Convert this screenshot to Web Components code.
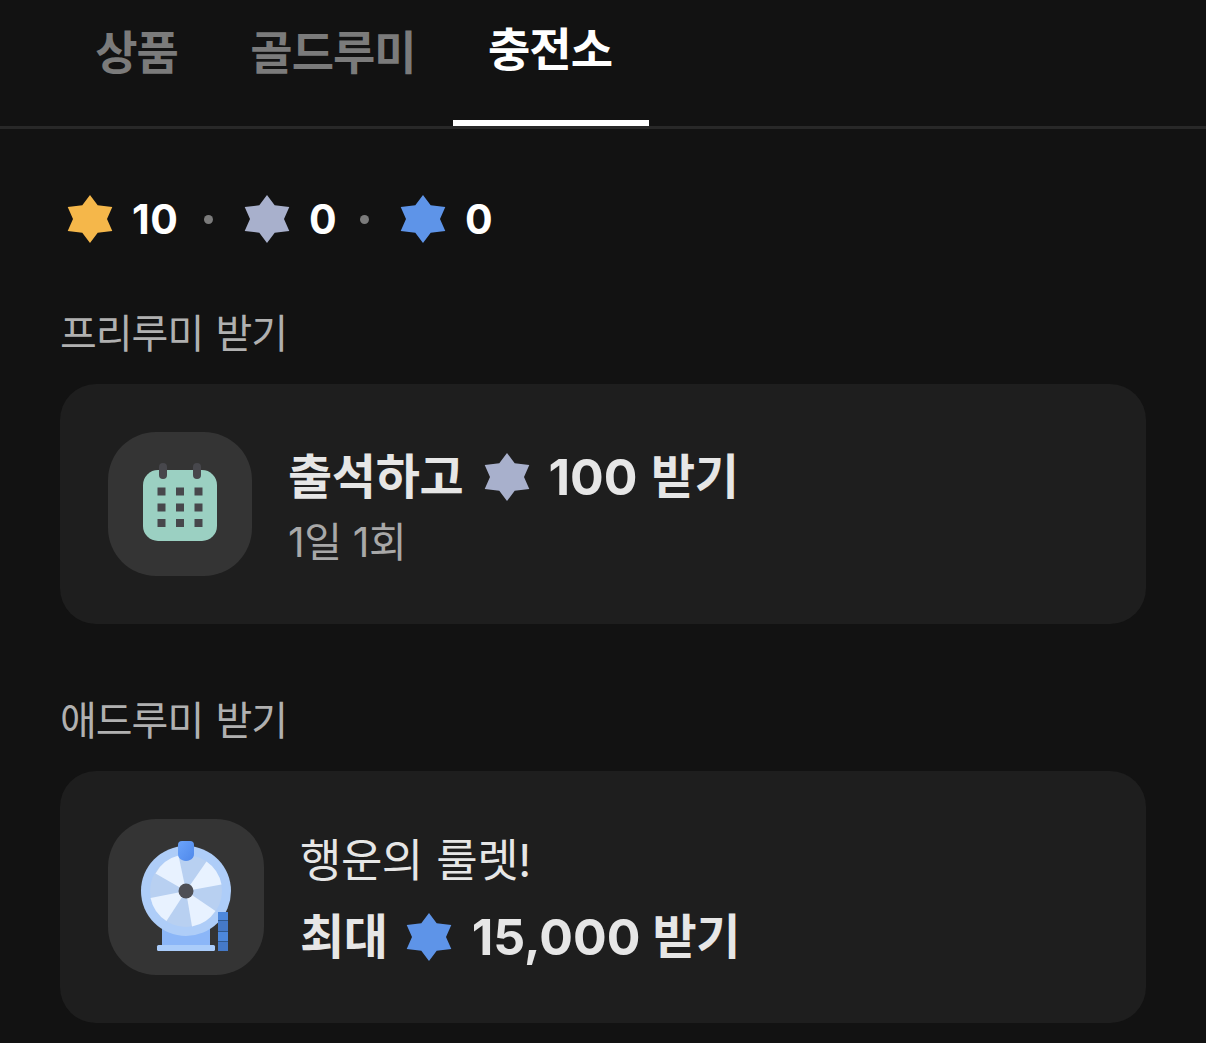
<!DOCTYPE html>
<html lang="ko">
<head>
<meta charset="UTF-8">
<meta name="viewport" content="width=device-width, initial-scale=1">
<title>충전소</title>
<style>
  :root {
    --bg: #121212;
    --card: #1e1e1e;
    --tile: #343434;
    --text: #e6e6e6;
    --muted: #b0b0b0;
    --gold: #f5b74a;
    --silver: #a8b0cc;
    --blue: #5e94e8;
  }
  html, body {
    margin: 0;
    height: 100%;
    background: var(--bg);
    overflow: hidden;
  }
  body {
    font-family: Inter, "Noto Sans CJK KR", sans-serif;
    color: var(--text);
  }
</style>
</head>
<body>
<charge-page>
  <tab-bar slot="tabs">
    <tab-item style="width:155px">상품</tab-item>
    <tab-item style="width:238px">골드루미</tab-item>
    <tab-item style="width:196px" active>충전소</tab-item>
  </tab-bar>

  <balance-list>
    <balance-item color="gold" width="46">10</balance-item>
    <balance-item color="silver" width="25">0</balance-item>
    <balance-item color="blue" width="25">0</balance-item>
  </balance-list>

  <reward-section label="프리루미 받기">
    <reward-card tile="144" offset="3">
      <calendar-icon slot="icon"></calendar-icon>
      <reward-title color="silver" amount="100" action="받기"
        style="--star-margin: 0 17.5px 0 19.5px; --amount-gap: 13.5px">출석하고</reward-title>
      <reward-note>1일 1회</reward-note>
    </reward-card>
  </reward-section>

  <reward-section label="애드루미 받기">
    <reward-card tile="156" offset="1">
      <roulette-icon slot="icon"></roulette-icon>
      <reward-note large>행운의 룰렛!</reward-note>
      <reward-title color="blue" amount="15,000" action="받기"
        style="--star-margin: 0 19px 0 17px; --amount-gap: 12px">최대</reward-title>
    </reward-card>
  </reward-section>
</charge-page>

<script>
  // Base: monta la plantilla en un shadow root abierto
  class BaseElement extends HTMLElement {
    constructor() {
      super();
      this.attachShadow({ mode: "open" });
    }

    connectedCallback() {
      this.shadowRoot.innerHTML = this.render();
    }
  }

  class ChargePage extends BaseElement {
    render() {
      return `
        <style>
          :host { display: block; }
          main { padding: 60px 60px 0; }
        </style>
        <slot name="tabs"></slot>
        <main><slot></slot></main>
      `;
    }
  }

  class TabBar extends BaseElement {
    render() {
      return `
        <style>
          :host {
            display: flex;
            height: 126px;
            padding-left: 60px;
            border-bottom: 3px solid #282828;
          }
        </style>
        <slot></slot>
      `;
    }
  }

  class TabItem extends BaseElement {
    render() {
      return `
        <style>
          :host {
            display: flex;
            justify-content: center;
            box-sizing: border-box;
            height: 126px;
            padding-top: 22px;
            padding-right: 2px;
            font-size: 46px;
            font-weight: 700;
            line-height: 60px;
            letter-spacing: -1px;
            white-space: nowrap;
            color: #7b7b7b;
          }
          :host([active]) {
            padding-top: 19px;
            border-bottom: 6px solid #fff;
            color: #fff;
          }
        </style>
        <slot></slot>
      `;
    }
  }

  // Estrella de seis puntas, la moneda de la tienda
  class RumiStar extends BaseElement {
    render() {
      return `
        <style>
          :host { display: block; flex: none; width: 48px; height: 48px; }
          svg { display: block; overflow: visible; }
        </style>
        <svg width="48" height="48" viewBox="0 0 48 48">
          <path fill="var(--${this.getAttribute("color")})"
            d="M24 0L31.7 10.3L46.3 12L41 24L46.3 36L31.7 37.7L24 48L16.3 37.7L1.7 36L7 24L1.7 12L16.3 10.3Z"/>
        </svg>
      `;
    }
  }

  class BalanceList extends BaseElement {
    render() {
      return `
        <style>
          :host { display: flex; height: 60px; align-items: center; }
        </style>
        <slot></slot>
      `;
    }
  }

  class BalanceItem extends BaseElement {
    render() {
      return `
        <style>
          :host {
            display: flex;
            align-items: center;
            padding-left: 6px;
            font-size: 41px;
            font-weight: 700;
            line-height: 60px;
            color: #fff;
          }
          .value {
            width: ${this.getAttribute("width")}px;
            margin-left: 18px;
            letter-spacing: 0.5px;
            white-space: nowrap;
          }
          :host(:not(:last-child))::after {
            content: "";
            width: 9px;
            height: 9px;
            margin: 0 24px 0 26px;
            border-radius: 50%;
            background: #7b7b7b;
          }
        </style>
        <rumi-star color="${this.getAttribute("color")}"></rumi-star>
        <span class="value"><slot></slot></span>
      `;
    }
  }

  class RewardSection extends BaseElement {
    render() {
      return `
        <style>
          :host { display: block; padding-top: 55px; }
          :host(:not(:last-child)) { margin-bottom: 12px; }
          h2 {
            margin: 0 0 20px;
            font-size: 40px;
            font-weight: 400;
            line-height: 60px;
            letter-spacing: -1px;
            word-spacing: 2px;
            color: var(--muted);
          }
        </style>
        <h2>${this.getAttribute("label")}</h2>
        <slot></slot>
      `;
    }
  }

  class RewardCard extends BaseElement {
    render() {
      const size = this.getAttribute("tile");
      return `
        <style>
          :host {
            display: flex;
            align-items: center;
            gap: 36px;
            padding: 48px;
            border-radius: 36px;
            background: var(--card);
          }
          .tile {
            flex: none;
            width: ${size}px;
            height: ${size}px;
            border-radius: 48px;
            background: var(--tile);
          }
          .body {
            display: flex;
            flex-direction: column;
            padding-top: ${this.getAttribute("offset") * 2}px;
          }
        </style>
        <div class="tile"><slot name="icon"></slot></div>
        <div class="body"><slot></slot></div>
      `;
    }
  }

  class RewardTitle extends BaseElement {
    render() {
      return `
        <style>
          :host {
            display: flex;
            align-items: center;
            height: 72px;
            font-size: 48px;
            font-weight: 700;
            line-height: 72px;
            letter-spacing: -0.3px;
            white-space: nowrap;
          }
          rumi-star { margin: var(--star-margin, 0 18px); }
          .amount {
            margin-right: var(--amount-gap, 12px);
            font-size: 50px;
            letter-spacing: 0;
          }
        </style>
        <span><slot></slot></span>
        <rumi-star color="${this.getAttribute("color")}"></rumi-star>
        <span class="amount">${this.getAttribute("amount")}</span>
        <span>${this.getAttribute("action")}</span>
      `;
    }
  }

  class RewardNote extends BaseElement {
    render() {
      return `
        <style>
          :host {
            display: block;
            font-size: 41px;
            line-height: 58px;
            margin-bottom: 2px;
            letter-spacing: -0.4px;
            color: #a8a8a8;
          }
          :host([large]) {
            font-size: 45px;
            line-height: 76px;
            letter-spacing: -0.5px;
            word-spacing: 1.5px;
            color: var(--text);
          }
        </style>
        <slot></slot>
      `;
    }
  }

  class CalendarIcon extends BaseElement {
    render() {
      let cells = "";
      for (const y of [55.5, 71.5, 87]) {
        for (const x of [49.5, 68, 86.5]) {
          cells += `<rect x="${x}" y="${y}" width="8" height="8"/>`;
        }
      }
      return `
        <style>:host, svg { display: block; }</style>
        <svg width="144" height="144" viewBox="0 0 144 144">
          <rect x="35" y="38" width="74" height="71" rx="15" fill="#9bd0c2"/>
          <g fill="#47474c">
            <rect x="51" y="31" width="8" height="16" rx="4"/>
            <rect x="85" y="31" width="8" height="16" rx="4"/>
            ${cells}
          </g>
        </svg>
      `;
    }
  }

  class RouletteIcon extends BaseElement {
    render() {
      return `
        <style>:host, svg { display: block; }</style>
        <svg width="156" height="156" viewBox="0 0 156 156">
          <defs>
            <linearGradient id="pin" x1="0" y1="0" x2="1" y2="1">
              <stop offset="0" stop-color="#6ba4fb"/>
              <stop offset="1" stop-color="#4f88ea"/>
            </linearGradient>
          </defs>
          <rect x="54" y="104" width="48" height="24" fill="#8bb6f8"/>
          <rect x="49" y="126" width="58" height="6" rx="1.5" fill="#aaccfa"/>
          <circle cx="78" cy="72" r="45" fill="#aecdf8"/>
          <circle cx="78" cy="72" r="36" fill="#b8d0f1"/>
          <g fill="#e8f2ff">
            <path d="M78 72L70.5 36.5A36 36 0 0 0 47.5 54.5Z"/>
            <path d="M78 72L98.5 42.5A36 36 0 0 1 113.5 65.5Z"/>
            <path d="M78 72L42.5 79A36 36 0 0 0 58.5 102Z"/>
            <path d="M78 72L107.5 92A36 36 0 0 1 84 107.5Z"/>
          </g>
          <circle cx="78" cy="72" r="7.5" fill="#4e4f55"/>
          <path d="M70 26Q70 22 74 22H82Q86 22 86 26V35Q86 39 82 41Q78 43 74 41Q70 39 70 35Z" fill="url(#pin)"/>
          <rect x="110" y="93" width="10" height="39" fill="#4579c7"/>
          <rect x="110" y="93" width="10" height="8" fill="#4d88dc"/>
          <rect x="110" y="113" width="10" height="9" fill="#4d88dc"/>
          <path d="M110 101.5H120M110 112.5H120M110 122.5H120" stroke="#30598f" stroke-width="1"/>
        </svg>
      `;
    }
  }

  customElements.define("rumi-star", RumiStar);
  customElements.define("charge-page", ChargePage);
  customElements.define("tab-bar", TabBar);
  customElements.define("tab-item", TabItem);
  customElements.define("balance-list", BalanceList);
  customElements.define("balance-item", BalanceItem);
  customElements.define("reward-section", RewardSection);
  customElements.define("reward-card", RewardCard);
  customElements.define("reward-title", RewardTitle);
  customElements.define("reward-note", RewardNote);
  customElements.define("calendar-icon", CalendarIcon);
  customElements.define("roulette-icon", RouletteIcon);
</script>
</body>
</html>
